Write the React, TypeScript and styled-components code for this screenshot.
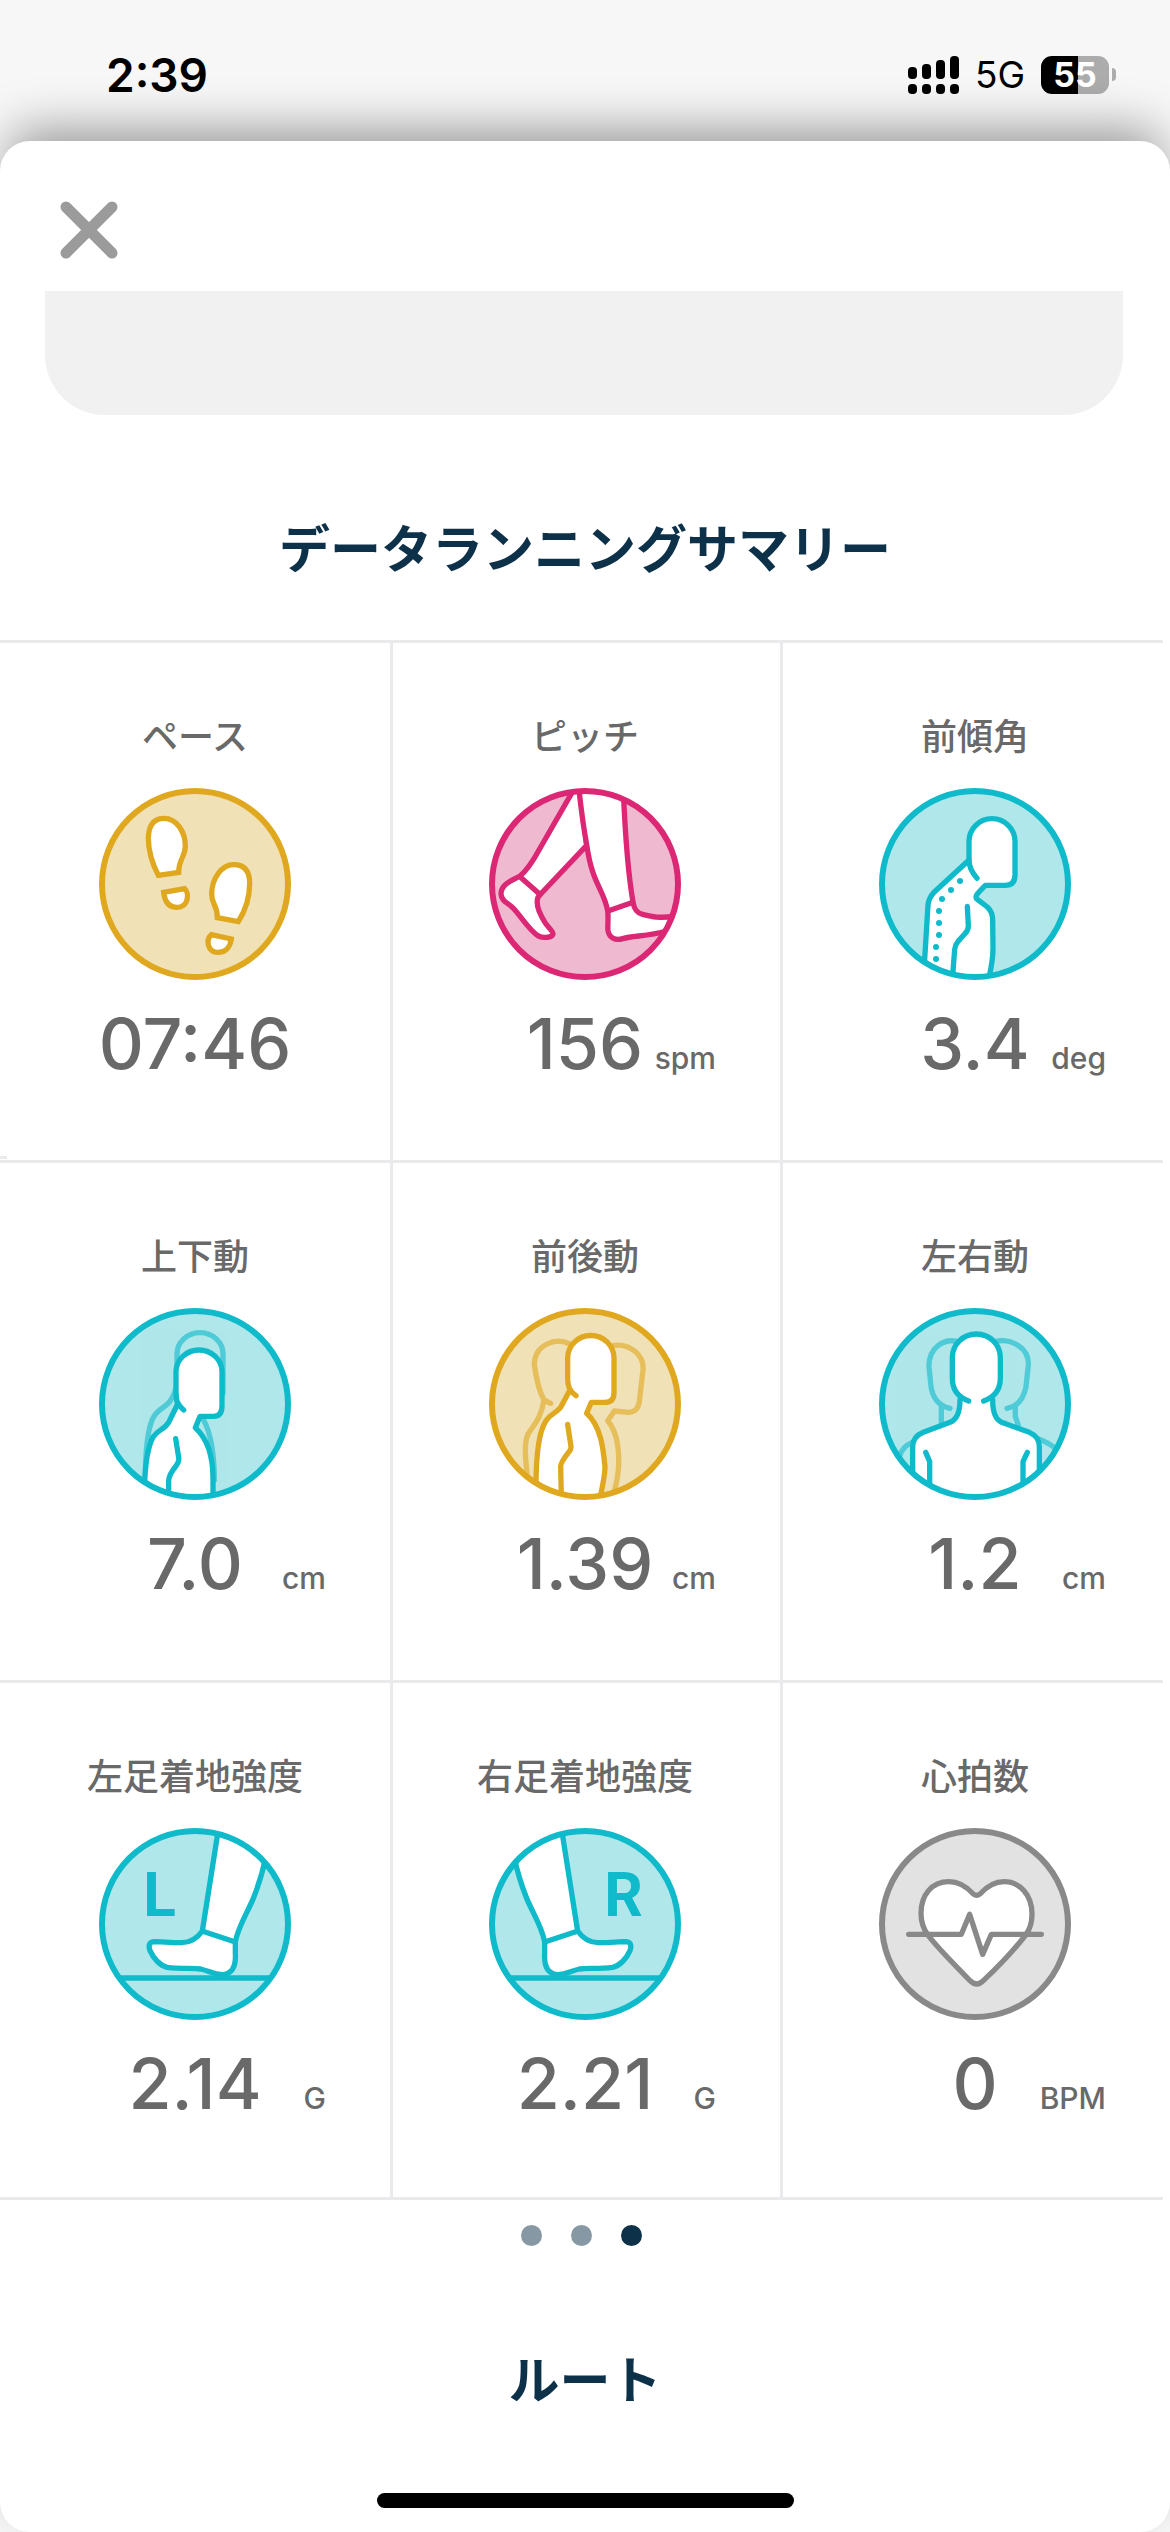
import React from "react";
import styled, { createGlobalStyle } from "styled-components";

const GlobalStyle = createGlobalStyle`
  *, *::before, *::after { box-sizing: border-box; }
  body {
    margin: 0;
    background: #f7f7f7;
    font-family: Inter, "Noto Sans CJK JP", sans-serif;
    color: #696969;
  }
  h1, h2, h3, p, ul { margin: 0; padding: 0; }
  button { border: 0; padding: 0; background: none; cursor: pointer; }
`;

const Screen = styled.div`
  min-height: 100vh;
  display: flex;
  flex-direction: column;
  overflow: hidden;
`;

const StatusBar = styled.header`
  height: 141px;
  padding: 8px 54px 0 106px;
  display: flex;
  align-items: center;
  justify-content: space-between;
  color: #000;
`;

const Clock = styled.time`
  font-size: 46px;
  font-weight: 600;
  line-height: 60px;
`;

const StatusGroup = styled.div`
  display: flex;
  align-items: center;
  gap: 16px;
`;

const Network = styled.span`
  font-size: 37px;
  font-weight: 400;
  line-height: 48px;
`;

const Battery = styled.div`
  display: flex;
  align-items: center;
  gap: 3px;
`;

const BatteryBody = styled.span<{ $level: number }>`
  width: 68px;
  height: 38px;
  border-radius: 11px;
  display: flex;
  align-items: center;
  justify-content: center;
  color: #fff;
  font-size: 34px;
  font-weight: 700;
  line-height: 38px;
  background: linear-gradient(to right, #000 ${(p) => p.$level}%, #acacac ${(p) => p.$level}%);
`;

const BatteryTip = styled.span`
  width: 4px;
  height: 13px;
  border-radius: 0 4px 4px 0;
  background: #acacac;
`;

const Sheet = styled.main`
  flex: 1;
  display: flex;
  flex-direction: column;
  background: #fff;
  border-radius: 30px;
  box-shadow: 0 -20px 50px -10px rgba(0, 0, 0, 0.4);
`;

const Toolbar = styled.div`
  height: 150px;
  padding: 60px 60px 0;
`;

const CloseButton = styled.button`
  display: block;
  width: 58px;
  height: 58px;
`;

const CardEnd = styled.div`
  height: 124px;
  margin: 0 47px 0 45px;
  border-radius: 0 0 60px 60px;
  background: #f1f1f1;
`;

const Title = styled.h2`
  margin: 97px 0 52px;
  text-align: center;
  color: #0e314a;
  font-size: 51px;
  font-weight: 700;
  line-height: 76px;
`;

const Rule = styled.div`
  height: 3px;
  margin-right: 7px;
  background: #eaeaec;
`;

const Row = styled.ul`
  position: relative;
  display: grid;
  grid-template-columns: repeat(3, 1fr);
  list-style: none;
`;

/* Right end of the previous page's rule, peeking in from the left. */
const PreviousPageEdge = styled.span`
  position: absolute;
  left: 0;
  bottom: 1px;
  width: 7px;
  height: 3px;
  background: #eaeaec;
`;

const Cell = styled.li<{ $last: boolean }>`
  display: flex;
  flex-direction: column;
  align-items: center;
  padding: 67px 3px ${(p) => (p.$last ? 71 : 74)}px 0;
  border-left: 3px solid #eaeaec;
  &:first-child { border-left-color: transparent; }
`;

const Label = styled.h3`
  margin-bottom: 24px;
  font-size: 36px;
  font-weight: 500;
  line-height: 54px;
`;

const IconSvg = styled.svg`
  display: block;
  width: 192px;
  height: 192px;
  fill: none;
  stroke-width: 16;
`;

const ValueLine = styled.p`
  align-self: stretch;
  margin-top: 22px;
  padding: 0 61px;
  display: grid;
  grid-template-columns: 1fr auto 1fr;
  align-items: baseline;
`;

const Value = styled.span`
  grid-column: 2;
  font-size: 70px;
  font-weight: 500;
  line-height: 84px;
`;

const Unit = styled.span`
  justify-self: end;
  font-size: 30px;
  font-weight: 500;
  line-height: 36px;
`;

const Pager = styled.nav`
  display: flex;
  justify-content: center;
  gap: 29px;
  margin: 25px 7px 0 0;
`;

const Dot = styled.button<{ $active: boolean }>`
  width: 21px;
  height: 21px;
  border-radius: 50%;
  background: ${(p) => (p.$active ? "#0e314a" : "#8798a5")};
`;

const HomeIndicator = styled.div`
  width: 417px;
  height: 15px;
  margin: auto auto 24px;
  border-radius: 8px;
  background: #000;
`;

const tones = {
  gold: { line: "#e0a81f", fill: "#f1e1b7" },
  pink: { line: "#db2774", fill: "#efb9d0" },
  teal: { line: "#0fbaca", fill: "#b0e7ea" },
  gray: { line: "#898989", fill: "#e2e2e2" },
};
type Tone = keyof typeof tones;

function Badge({ id, tone, children }: { id: string; tone: Tone; children: React.ReactNode }) {
  const c = tones[tone];
  return (
    <IconSvg viewBox="57 264 576 576" stroke={c.line} aria-hidden="true">
      <clipPath id={id}>
        <circle cx="345" cy="552" r="280" />
      </clipPath>
      <circle cx="345" cy="552" r="280" fill={c.fill} stroke="none" />
      <g clipPath={`url(#${id})`}>{children}</g>
      <circle cx="345" cy="552" r="279" strokeWidth="18" />
    </IconSvg>
  );
}

const Footprints = () => (
  <g fill="#fff">
    <path d="M235 526C212 482 205 445 205 414C206 374 222 355 252 355C290 355 316 396 316 438C316 470 296 478 296 517Z" />
    <path d="M251 577L314 566C328 578 327 622 291 622C264 622 254 602 251 577Z" />
    <path d="M412 653L475 665C496 632 509 590 509 550C509 512 492 494 461 494C425 494 395 535 395 583C395 612 413 618 412 653Z" />
    <path d="M394 704L454 717C451 740 437 757 414 757C383 757 376 720 394 704Z" />
  </g>
);

const WalkingLegs = () => (
  <g fill="#fff" strokeLinejoin="round">
    <path d="M322 250L207 450C188 485 172 510 150 528C125 542 93 552 93 582C94 605 115 608 130 625C158 656 180 693 205 708C222 716 248 712 249 702C249 692 232 680 224 666C208 640 197 610 204 592L212 582L350 436L330 250Z" />
    <path d="M150 530L211 584" />
    <path d="M325 250C333 330 342 390 351 440C368 555 400 565 413 632C416 655 412 678 414 692C418 716 438 722 458 716C490 706 530 710 590 693L615 648C570 656 545 650 518 643C498 638 492 625 489 606C474 520 465 400 459 250Z" />
    <path d="M416 632L489 607" />
  </g>
);

const spine = [[300, 543], [273, 570], [246, 597], [237, 633], [237, 669], [237, 705], [228, 741], [228, 777]];

const LeaningFigure = () => (
  <g strokeLinecap="round" strokeLinejoin="round">
    <path
      fill="#fff"
      d="M189 860L204 615Q206 594 222 577L327 480V424A69 68 0 0 1 465 424V525Q465 556 435 556H376C352 580 342 590 352 598L382 621Q398 636 398 660L399 745Q399 790 380 860Z"
    />
    <path d="M327 480C327 504 337 519 351 535" />
    <path d="M322 619L325 678Q325 692 314 702L294 724Q285 735 284 748L277 840" />
    <g fill={tones.teal.line} stroke="none">
      {spine.map(([x, y]) => (
        <circle key={y} cx={x} cy={y} r="9" />
      ))}
    </g>
  </g>
);

const VerticalFigure = () => (
  <g strokeLinecap="round" strokeLinejoin="round">
    <g opacity="0.6">
      <path d="M291 470V402A69 64 0 0 1 429 402V520" />
      <path d="M288 505C268 572 238 554 218 596C202 632 196 690 196 780" />
      <path d="M368 594C394 640 403 700 403 780" />
    </g>
    <path
      fill="#fff"
      d="M194 860V790C196 730 203 680 220 650C235 628 255 628 267 605L293 552Q288 538 288 515V455A69 65 0 0 1 426 455V558Q426 589 400 589H360L346 623C392 665 399 735 399 775V860Z"
    />
    <path d="M293 548Q298 559 311 570" />
    <path d="M287 656L296 712Q298 725 290 735Q266 765 266 782V830" />
  </g>
);

const ForwardBackFigure = () => (
  <g strokeLinecap="round" strokeLinejoin="round">
    <g opacity="0.6">
      <path d="M300 372C255 350 193 375 193 435C198 470 205 510 222 540L242 550" />
      <path d="M222 540C214 590 195 612 180 633C163 655 163 690 172 770" />
      <path d="M432 376C480 370 523 405 519 450L508 545Q503 577 475 577L433 573L413 602C443 637 447 690 446 730C446 760 440 790 430 825" />
    </g>
    <path
      fill="#fff"
      d="M198 860V800C198 710 206 635 228 602C243 580 258 580 272 562L300 510Q293 495 293 478V414A69 67 0 0 1 432 414V518Q432 547 405 547H364L350 580C394 620 400 690 405 740Q405 770 384 860Z"
    />
    <path d="M299 507Q304 517 318 527" />
    <path d="M293 613L303 680Q304 688 295 698Q270 730 272 742L274 830" />
  </g>
);

const SidewaysFigure = () => (
  <g strokeLinecap="round" strokeLinejoin="round">
    <g opacity="0.6">
      <path d="M290 364C250 355 205 385 207 440L212 490C215 530 235 557 270 565M244 562V620M118 712C125 685 140 672 170 662" />
      <path d="M408 364C450 355 508 380 505 435L498 500C490 540 470 560 441 565M466 562V590L475 616M534 656C560 665 575 675 590 688" />
    </g>
    <path
      fill="#fff"
      stroke="none"
      d="M158 860V680Q158 650 190 637L270 607Q300 595 300 530C284 515 277 500 277 475V412A72 70 0 0 1 421 412V475C421 500 414 515 398 530Q398 595 425 607L508 637Q538 650 538 680V860Z"
    />
    <path d="M158 800V680Q158 650 190 637L270 607Q300 595 300 540" />
    <path d="M398 540Q398 595 425 607L508 637Q538 650 538 680V800" />
    <path d="M326 543C290 530 277 505 277 475V412A72 70 0 0 1 421 412V475C421 505 408 530 371 543" />
    <path d="M197 697L209 725V810M502 697L489 725V810" />
  </g>
);

const LandingFoot = ({ side }: { side: "L" | "R" }) => (
  <>
    <path d="M90 714H600" />
    <g
      fill="#fff"
      strokeLinejoin="round"
      transform={side === "R" ? "translate(690 0) scale(-1 1)" : undefined}
    >
      <path d="M418 250L367 573C350 597 332 608 305 608C270 608 245 605 222 605C205 606 206 620 210 632C220 655 240 677 262 682C300 687 340 684 362 687C390 693 400 705 430 704C460 700 468 672 466 640V605C475 560 500 522 520 475C532 445 545 410 558 350V250Z" />
      <path d="M366 573L466 606" />
    </g>
    <text
      x={side === "L" ? 190 : 403}
      y="528"
      fill={tones.teal.line}
      stroke="none"
      fontFamily="Roboto, sans-serif"
      fontSize="181"
      fontWeight="700"
    >
      {side}
    </text>
  </>
);

const HeartRate = () => (
  <g strokeLinecap="round" strokeLinejoin="round">
    <path
      fill="#fff"
      d="M360 462Q350 470 340 462C320 440 298 425 267 425C215 425 183 465 183 520C183 550 190 568 205 587C240 632 290 680 330 722Q350 742 370 722C415 680 462 630 497 585C510 568 516 550 516 522C516 465 480 425 432 425C402 425 380 440 360 462Z"
    />
    <path d="M146 583H304L329 523L368 643L394 583H544" />
  </g>
);

interface Metric {
  label: string;
  value: string;
  unit?: string;
  tone: Tone;
  art: React.ReactNode;
}

const rows: Metric[][] = [
  [
    { label: "ペース", value: "07:46", tone: "gold", art: <Footprints /> },
    { label: "ピッチ", value: "156", unit: "spm", tone: "pink", art: <WalkingLegs /> },
    { label: "前傾角", value: "3.4", unit: "deg", tone: "teal", art: <LeaningFigure /> },
  ],
  [
    { label: "上下動", value: "7.0", unit: "cm", tone: "teal", art: <VerticalFigure /> },
    { label: "前後動", value: "1.39", unit: "cm", tone: "gold", art: <ForwardBackFigure /> },
    { label: "左右動", value: "1.2", unit: "cm", tone: "teal", art: <SidewaysFigure /> },
  ],
  [
    { label: "左足着地強度", value: "2.14", unit: "G", tone: "teal", art: <LandingFoot side="L" /> },
    { label: "右足着地強度", value: "2.21", unit: "G", tone: "teal", art: <LandingFoot side="R" /> },
    { label: "心拍数", value: "0", unit: "BPM", tone: "gray", art: <HeartRate /> },
  ],
];

const signalTops = [11, 8, 4, 0];

export default function App() {
  return (
    <Screen>
      <GlobalStyle />
      <StatusBar>
        <Clock>2:39</Clock>
        <StatusGroup>
          <svg width="51" height="38" viewBox="0 0 51 38" aria-hidden="true">
            {signalTops.map((top, i) => (
              <g key={top}>
                <rect x={i * 14} y={top} width="9" height={23 - top} rx="4" />
                <rect x={i * 14} y="28" width="9" height="10" rx="4" />
              </g>
            ))}
          </svg>
          <Network>5G</Network>
          <Battery>
            <BatteryBody $level={54}>55</BatteryBody>
            <BatteryTip />
          </Battery>
        </StatusGroup>
      </StatusBar>
      <Sheet>
        <Toolbar>
          <CloseButton type="button" aria-label="閉じる">
            <svg width="58" height="58" viewBox="0 0 58 58" aria-hidden="true">
              <path d="M6 6L52 52M52 6L6 52" stroke="#9b9b9b" strokeWidth="11" strokeLinecap="round" />
            </svg>
          </CloseButton>
        </Toolbar>
        <CardEnd />
        <Title>データランニングサマリー</Title>
        {rows.map((row, r) => (
          <React.Fragment key={r}>
            <Rule />
            <Row>
              {row.map((m, c) => (
                <Cell key={m.label} $last={r === rows.length - 1}>
                  <Label>{m.label}</Label>
                  <Badge id={`badge-${r}-${c}`} tone={m.tone}>
                    {m.art}
                  </Badge>
                  <ValueLine>
                    <Value>{m.value}</Value>
                    {m.unit && <Unit>{m.unit}</Unit>}
                  </ValueLine>
                </Cell>
              ))}
              {r === 0 && <PreviousPageEdge />}
            </Row>
          </React.Fragment>
        ))}
        <Rule />
        <Pager>
          {[1, 2, 3].map((page) => (
            <Dot key={page} type="button" $active={page === 3} aria-label={`${page}ページ`} />
          ))}
        </Pager>
        <Title>ルート</Title>
        <HomeIndicator />
      </Sheet>
    </Screen>
  );
}
